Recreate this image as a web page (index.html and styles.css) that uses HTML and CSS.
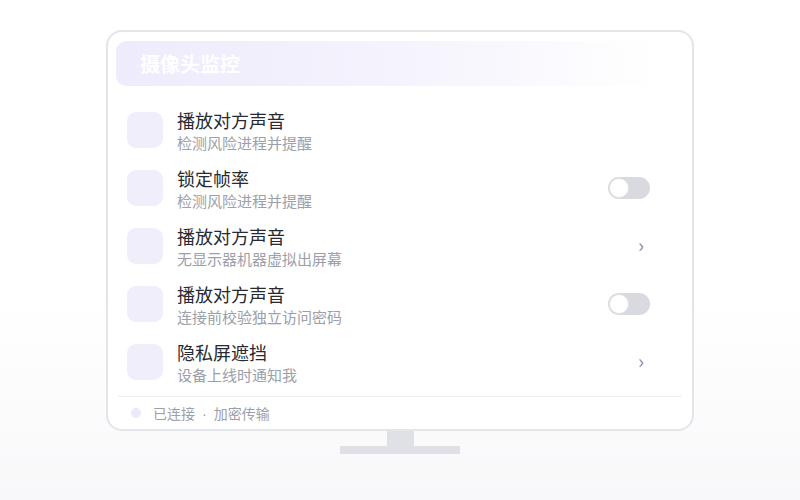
FILE: index.html
```html
<!DOCTYPE html>
<html lang="zh">
<head>
<meta charset="utf-8">
<title>摄像头监控</title>
<link rel="stylesheet" href="styles.css">
</head>
<body>
<div class="stage">
  <div class="monitor">
    <div class="header">摄像头监控</div>
    <div class="list">
      <div class="row">
        <div class="icon"></div>
        <div class="text">
          <div class="title">播放对方声音</div>
          <div class="sub">检测风险进程并提醒</div>
        </div>
      </div>
      <div class="row">
        <div class="icon"></div>
        <div class="text">
          <div class="title">锁定帧率</div>
          <div class="sub">检测风险进程并提醒</div>
        </div>
        <div class="toggle"><span class="knob"></span></div>
      </div>
      <div class="row">
        <div class="icon"></div>
        <div class="text">
          <div class="title">播放对方声音</div>
          <div class="sub">无显示器机器虚拟出屏幕</div>
        </div>
        <div class="chev">›</div>
      </div>
      <div class="row">
        <div class="icon"></div>
        <div class="text">
          <div class="title">播放对方声音</div>
          <div class="sub">连接前校验独立访问密码</div>
        </div>
        <div class="toggle"><span class="knob"></span></div>
      </div>
      <div class="row">
        <div class="icon"></div>
        <div class="text">
          <div class="title">隐私屏遮挡</div>
          <div class="sub">设备上线时通知我</div>
        </div>
        <div class="chev">›</div>
      </div>
    </div>
    <div class="footer">
      <span class="dot"></span>
      <span class="status">已连接<span class="sep">·</span>加密传输</span>
    </div>
  </div>
  <div class="neck"></div>
  <div class="base"></div>
</div>
</body>
</html>
```
FILE: styles.css
```css
* { box-sizing: border-box; }
html, body { height: 100%; }
body {
  margin: 0;
  background: linear-gradient(#ffffff 0%, #ffffff 60%, #f8f8fa 100%);
  font-family: "Noto Sans CJK SC", "Noto Sans", sans-serif;
}
.stage {
  display: flex;
  flex-direction: column;
  align-items: center;
  padding-top: 30px;
}
.monitor {
  width: 588px;
  height: 401px;
  border: 2px solid #e3e5ea;
  border-radius: 16px;
  background: #ffffff;
  padding: 9px 8px 0;
  display: flex;
  flex-direction: column;
}
.header {
  height: 45px;
  border-radius: 10px;
  background: linear-gradient(90deg, #eeebfc 0%, #f5f3fd 50%, rgba(255,255,255,0) 96%);
  color: #ffffff;
  font-size: 20px;
  font-weight: 700;
  line-height: 45px;
  padding-left: 24px;
}
.list {
  margin: 15px 2px 0;
  display: flex;
  flex-direction: column;
}
.row {
  height: 58px;
  display: flex;
  align-items: center;
  padding: 0 32px 0 9px;
  gap: 14px;
}
.icon {
  width: 36px;
  height: 36px;
  border-radius: 9px;
  background: #f1eefc;
  flex: none;
}
.text {
  flex: 1;
  display: flex;
  flex-direction: column;
}
.title {
  font-size: 18px;
  line-height: 24px;
  color: #272a30;
}
.sub {
  font-size: 15px;
  line-height: 20px;
  margin-top: 1px;
  color: #9ca0aa;
}
.toggle {
  width: 42px;
  height: 22px;
  border-radius: 11px;
  background: #d8dae0;
  position: relative;
  flex: none;
}
.knob {
  position: absolute;
  left: 1px;
  top: 1px;
  width: 20px;
  height: 20px;
  border-radius: 50%;
  background: #ffffff;
  border: 1px solid #e2e4e8;
}
.chev {
  font-size: 20px;
  line-height: 20px;
  color: #8b909a;
  padding-right: 6px;
  margin-top: -2px;
}
.footer {
  margin: 5px 2px 0;
  border-top: 1px solid #eceef1;
  height: 33px;
  display: flex;
  align-items: center;
  padding-left: 13px;
  gap: 12px;
}
.dot {
  width: 10px;
  height: 10px;
  border-radius: 50%;
  background: #ece9fb;
}
.status {
  font-size: 14px;
  color: #9ca0aa;
}
.sep {
  font-family: "Liberation Sans", sans-serif;
  padding: 0 7px;
}
.neck {
  width: 27px;
  height: 15px;
  background: #dfe1e6;
}
.base {
  width: 120px;
  height: 8px;
  background: #dfe1e6;
}
```
